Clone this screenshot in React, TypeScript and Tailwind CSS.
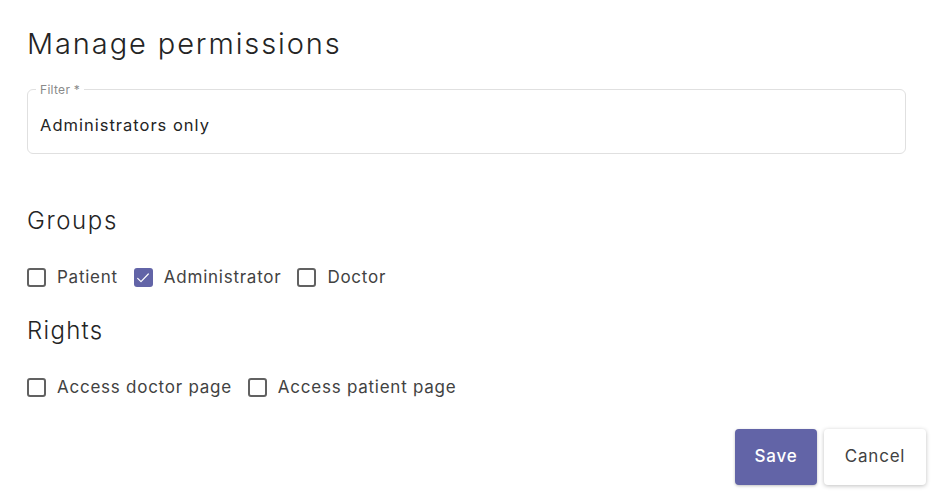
import { useState } from "react";

const groups = ["Patient", "Administrator", "Doctor"];
const rights = ["Access doctor page", "Access patient page"];

function Check({ label, checked, onToggle }: { label: string; checked: boolean; onToggle: () => void }) {
  return (
    <label className="flex items-center gap-[11px] cursor-pointer select-none" onClick={onToggle}>
      <span
        className={
          checked
            ? "w-[19px] h-[19px] rounded-[3px] bg-[#6264a7] flex items-center justify-center"
            : "w-[19px] h-[19px] rounded-[3px] border-2 border-[#616161] bg-white"
        }
      >
        {checked && (
          <svg width="16" height="16" viewBox="0 0 24 24" fill="none" stroke="white" strokeWidth="1.8" strokeLinecap="round" strokeLinejoin="round">
            <path d="M4 12.5l5 5L20 6" />
          </svg>
        )}
      </span>
      <span className="text-[17px] text-[#424242] tracking-[0.75px]">{label}</span>
    </label>
  );
}

export default function App() {
  const [sel, setSel] = useState<Record<string, boolean>>({ Administrator: true });
  const toggle = (k: string) => setSel({ ...sel, [k]: !sel[k] });

  return (
    <div className="w-[935px] h-[495px] bg-white px-[27px] pt-[24px] text-[#242424]" style={{ fontFamily: "Inter, 'Noto Sans', sans-serif" }}>
      <h1 className="text-[29px] font-light leading-[40px] tracking-[1.9px]">Manage permissions</h1>

      {/* Filter field */}
      <div className="relative mt-[25px] w-[879px] h-[65px] border border-[#e0e0e0] rounded-[6px] flex items-center px-[12px]">
        <span className="absolute -top-[7px] left-[8px] bg-white px-[4px] text-[12px] leading-[14px] text-[#8a8a8a] tracking-[0.3px]">Filter *</span>
        <span className="text-[16.5px] text-[#242424] mt-[8px] tracking-[1px]">Administrators only</span>
      </div>

      <h2 className="mt-[50px] text-[24px] font-light leading-[34px] tracking-[1.6px]">Groups</h2>
      <div className="mt-[27px] flex gap-[16px]">
        {groups.map((g) => (
          <Check key={g} label={g} checked={!!sel[g]} onToggle={() => toggle(g)} />
        ))}
      </div>

      <h2 className="mt-[23px] text-[24px] font-light leading-[34px] tracking-[1.3px]">Rights</h2>
      <div className="mt-[27px] flex gap-[16px]">
        {rights.map((r) => (
          <Check key={r} label={r} checked={!!sel[r]} onToggle={() => toggle(r)} />
        ))}
      </div>

      <div className="mt-[29px] flex justify-end gap-[7px] -mr-[18px]">
        <button className="w-[82px] h-[56px] rounded-[4px] bg-[#6264a7] text-white text-[17px] font-medium tracking-[0.8px] shadow-[0_1px_3px_rgba(0,0,0,0.25)]">Save</button>
        <button className="w-[102px] h-[56px] rounded-[4px] bg-white text-[#424242] text-[17px] tracking-[0.8px] shadow-[0_1px_4px_rgba(0,0,0,0.25)]">Cancel</button>
      </div>
    </div>
  );
}
